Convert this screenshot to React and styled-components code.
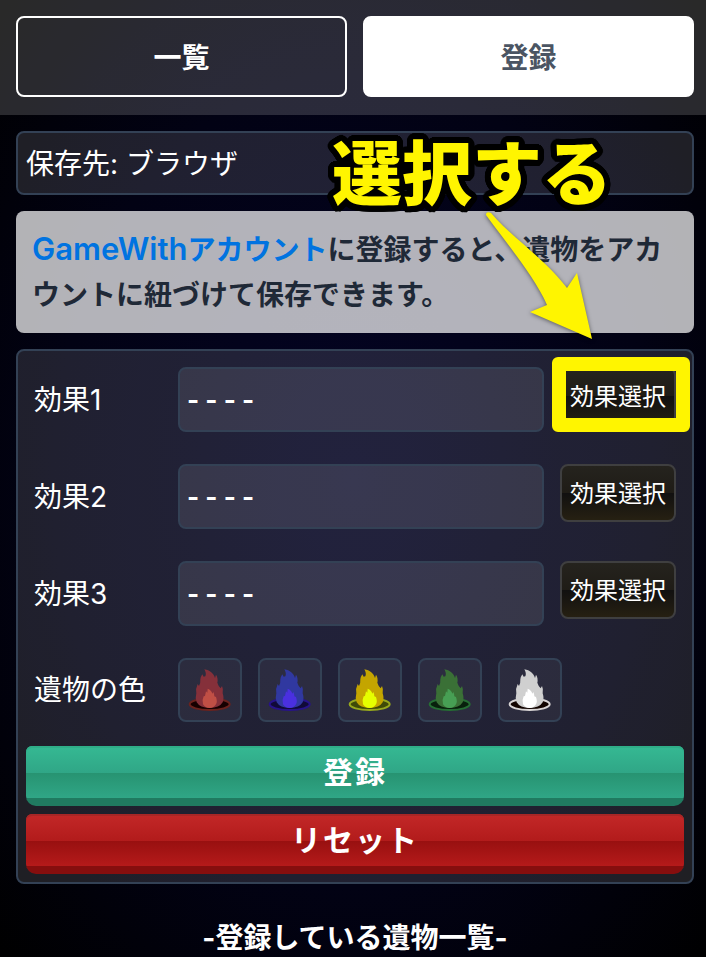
import React from "react"
import styled, { createGlobalStyle, css } from "styled-components";

const effects = ["効果1", "効果2", "効果3"]

const colors = [
  { name: "赤", flame: "#85303a", core: "#c04f45", dish: "#160000", rim: "#6b221d" },
  { name: "青", flame: "#3038a0", core: "#4a30e0", dish: "#100a38", rim: "#27128a" },
  { name: "黄", flame: "#c4a500", core: "#e6ff00", dish: "#3f4a08", rim: "#97a81c" },
  { name: "緑", flame: "#3a7036", core: "#479f54", dish: "#08200c", rim: "#256e33" },
  { name: "白", flame: "#d0d0d0", core: "#ffffff", dish: "#120400", rim: "#d8d4d4" },
]

// ring of hard shadows, gives the callout a round black outline
const outline = Array.from({ length: 32 }, (_, i) => {
  const angle = (i / 32) * Math.PI * 2
  return `${(Math.cos(angle) * 6).toFixed(1)}px ${(Math.sin(angle) * 6).toFixed(1)}px 0 #000`
}).join(", ")

export default function App() {
  return (
    <>
      <GlobalStyle />
      <TabBar>
        <Tab type="button">一覧</Tab>
        <Tab type="button" $active>登録</Tab>
      </TabBar>
      <Main>
        <SaveTarget>
          保存先: ブラウザ
          <Callout>選択する</Callout>
          <Arrow />
        </SaveTarget>
        <Notice>
          <a href="#account"><Brand>GameWith</Brand>アカウント</a>に登録すると、遺物をアカウントに紐づけて保存できます。
        </Notice>
        <Panel onSubmit={e => e.preventDefault()}>
          {effects.map((label, i) => (
            <Row key={label}>
              <Label htmlFor={`effect-${i}`}>{label}</Label>
              <EffectInput id={`effect-${i}`} readOnly value="- - - -" />
              <PickerCell>
                <PickButton type="button">効果選択</PickButton>
                {i === 0 && <Highlight />}
              </PickerCell>
            </Row>
          ))}
          <Row>
            <Label as="span">遺物の色</Label>
            <Swatches>
              {colors.map(color => (
                <Swatch key={color.name} type="button" aria-label={color.name}>
                  <Flame {...color} />
                </Swatch>
              ))}
            </Swatches>
          </Row>
          <Actions>
            <ActionButton type="submit">登録</ActionButton>
            <ActionButton type="reset" $danger>リセット</ActionButton>
          </Actions>
        </Panel>
        <ListTitle>-登録している遺物一覧-</ListTitle>
      </Main>
    </>
  )
}

function Flame({ flame, core, dish, rim }) {
  return (
    <svg width="60" height="60" viewBox="6 6 180 180" aria-hidden="true">
      <ellipse cx="95" cy="139" rx="60" ry="17" fill={dish} stroke={rim} strokeWidth="6" />
      <path
        fill={flame}
        d="M79 34 C96 37 107 46 111 60 L114 50 Q121 60 118 74 Q121 84 128 91 L132 84 Q137 94 134 106 Q139 122 134 133 Q124 150 95 150 Q66 150 56 133 Q51 119 55 106 Q52 92 59 78 L63 84 Q68 75 67 64 Q68 56 73 49 L77 56 L82 55 Q86 46 79 34Z"
      />
      <path
        fill={core}
        d="M89 92 Q100 96 103 107 L106 102 Q109 108 109 115 L114 117 Q119 131 114 139 Q108 150 95 150 Q81 150 75 139 Q71 128 77 115 L81 114 L84 100 L88 104Z"
      />
    </svg>
  )
}

function Arrow() {
  return (
    <ArrowSvg width="108" height="130" viewBox="486 211 108 130" aria-hidden="true">
      <path
        fill="#fff500"
        d="M486 215 Q486 211 491 213 C511 237 543 257 567 288 L577 273 L592 339 L530 312 L547 305 C536 279 508 245 486 215Z"
      />
    </ArrowSvg>
  )
}

const GlobalStyle = createGlobalStyle`
  * {
    box-sizing: border-box;
  }

  html {
    min-height: 100%;
    background: radial-gradient(ellipse at center, #040424 0%, #020214 60%, #000 100%);
  }

  body {
    margin: 0;
    color: #fff;
    font-family: Inter, "Noto Sans CJK JP", sans-serif;
    font-size: 28px;
    line-height: 44px;
  }

  button, input {
    font: inherit;
    color: inherit;
  }

  button {
    cursor: pointer;
  }
`;

const outlined = css`
  border: 2px solid #334155;
  border-radius: 8px;
`;

const TabBar = styled.nav`
  display: grid;
  grid-template-columns: 1fr 1fr;
  gap: 16px;
  padding: 16px 12px 18px 16px;
  background: rgba(255, 255, 255, 0.16);
`;

const Tab = styled.button`
  height: 81px;
  padding: 2px 0 0;
  border: 2px solid #fff;
  border-radius: 8px;
  font-weight: 700;
  color: ${props => (props.$active ? "#4b5563" : "#fff")};
  background: ${props => (props.$active ? "#fff" : "transparent")};
`;

const Main = styled.main`
  display: flex;
  flex-direction: column;
  gap: 16px;
  padding: 16px 12px 0 16px;
`;

const SaveTarget = styled.div`
  ${outlined}
  position: relative;
  height: 64px;
  padding: 9px 8px 7px;
  background: rgba(255, 255, 255, 0.12);
`;

const Callout = styled.strong`
  position: absolute;
  z-index: 1;
  top: -2px;
  right: 80px;
  font-size: 70px;
  font-weight: 900;
  line-height: 88px;
  white-space: nowrap;
  color: #fff500;
  text-shadow: ${outline};
`;

const ArrowSvg = styled.svg`
  position: absolute;
  z-index: 2;
  top: 78px;
  right: 98px;
  filter: drop-shadow(0 1px 2px rgba(0, 0, 0, 0.5));
`;

const Notice = styled.p`
  margin: 0;
  padding: 17px 16px 15px;
  border-radius: 8px;
  font-weight: 600;
  line-height: 45px;
  color: #1f2937;
  background: rgba(255, 255, 255, 0.7);

  a {
    color: #0073e0;
    text-decoration: none;
  }
`;

const Brand = styled.span`
  font-size: 31px;
  line-height: 1;
`;

const Panel = styled.form`
  ${outlined}
  display: flex;
  flex-direction: column;
  gap: 16px;
  padding: 8px;
  background: rgba(255, 255, 255, 0.12);
`;

const Row = styled.div`
  display: grid;
  grid-template-columns: 144px 1fr;
  grid-auto-columns: auto;
  grid-auto-flow: column;
  padding: 8px;
`;

const Label = styled.label`
  align-self: center;
`;

const EffectInput = styled.input`
  ${outlined}
  width: 100%;
  min-width: 0;
  height: 65px;
  padding: 0 7px;
  font-size: 26px;
  font-weight: 700;
  background: rgba(255, 255, 255, 0.1);
`;

const PickerCell = styled.div`
  position: relative;
  align-self: start;
  margin-left: 16px;
`;

const PickButton = styled.button`
  display: block;
  width: 116px;
  height: 58px;
  padding: 2px 0 0;
  border: 2px solid #3f3f40;
  border-radius: 8px;
  font-size: 24px;
  background: linear-gradient(#25231e 0%, #1f1c16 50%, #111010 50%, #262012 100%);
`;

const Highlight = styled.span`
  position: absolute;
  top: -10px;
  right: -14px;
  bottom: -7px;
  left: -8px;
  border: 14px solid #fff500;
  border-radius: 6px;
  pointer-events: none;
`;

const Swatches = styled.div`
  display: flex;
  gap: 16px;
`;

const Swatch = styled.button`
  ${outlined}
  width: 64px;
  height: 64px;
  padding: 0;
  background: rgba(255, 255, 255, 0.05);

  svg {
    display: block;
  }
`;

const Actions = styled.div`
  display: flex;
  flex-direction: column;
  gap: 8px;
`;

const ActionButton = styled.button`
  height: 60px;
  padding: 0 0 8px;
  border: 0;
  border-radius: 6px 6px 10px 10px;
  font-size: 30px;
  font-weight: 700;
  letter-spacing: 2px;
  background: ${props =>
    props.$danger
      ? "linear-gradient(#c32828 0, #b21b1b 27px, #981010 27px, #b51a1a 52px, #860e0e 52px)"
      : "linear-gradient(#35b993 0, #30a686 27px, #279371 27px, #30a686 52px, #207a60 52px)"};
  box-shadow: inset 0 2px 0 ${props => (props.$danger ? "#a82626" : "#2fae88")};
`;

const ListTitle = styled.h2`
  margin: 16px 0 0;
  font-size: 28px;
  font-weight: 700;
  line-height: 44px;
  text-align: center;
`;
